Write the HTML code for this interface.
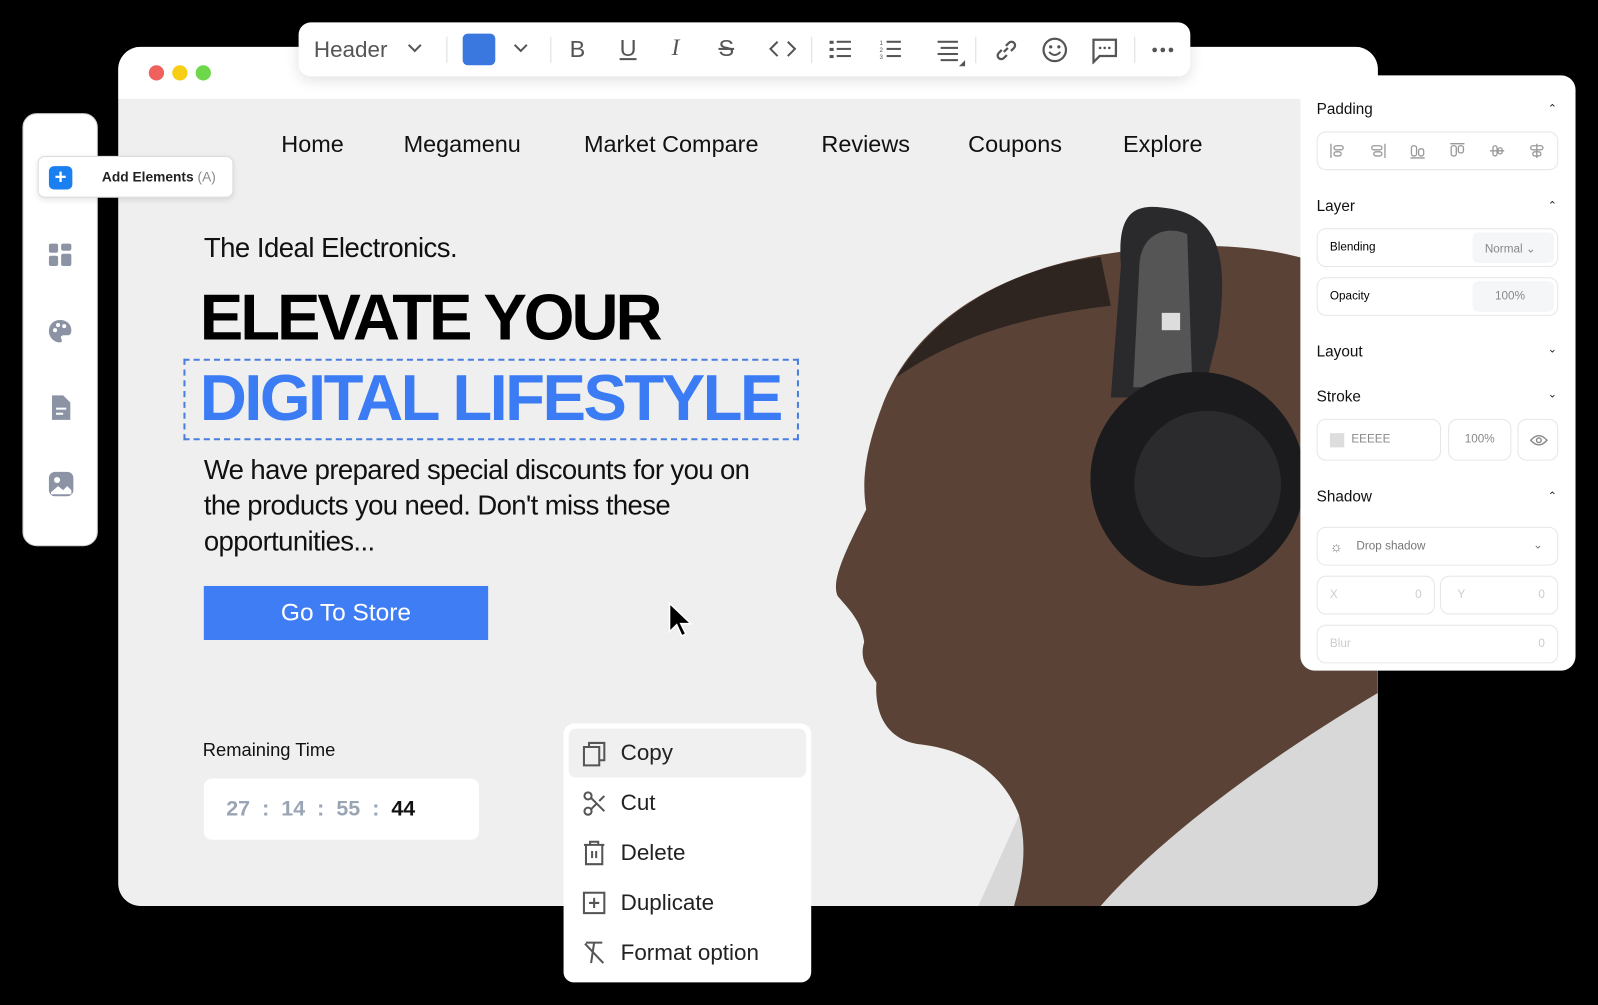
<!DOCTYPE html>
<html><head><meta charset="utf-8"><style>
*{margin:0;padding:0;box-sizing:border-box}
body{width:1598px;height:1005px;background:#000;overflow:hidden;font-family:"Liberation Sans",sans-serif}
#s{width:1568px;height:986px;position:relative;transform:scale(1.0191);transform-origin:0 0}
.a{position:absolute}
.win{left:116px;top:46px;width:1236px;height:843px;border-radius:22px;background:#efefef;overflow:hidden}
.top{left:0;top:0;width:1236px;height:51px;background:#fff}
.dot{width:15px;height:15px;border-radius:50%;top:18px}
.nav{top:82px;font-size:23px;color:#111}
.tb{left:293px;top:22px;width:875px;height:53px;background:#fff;border-radius:12px;box-shadow:0 4px 14px rgba(0,0,0,.12)}
.tb svg{position:absolute}
.sep{position:absolute;top:14px;width:1px;height:26px;background:#ddd}
.side{left:22px;top:111px;width:74px;height:425px;background:#fff;border-radius:14px;border:1px solid #ccc}
.panel{left:1276px;top:74px;width:270px;height:584px;background:#fff;border-radius:14px}
.panel .h{position:absolute;left:16px;font-size:15px;color:#111}
.panel .c{position:absolute;right:18px;font-size:11px;color:#222}
.box{position:absolute;border:1px solid #e6e6e6;border-radius:9px;font-size:11.5px}
.menu{left:553px;top:710px;width:243px;height:254px;background:#fff;border-radius:10px}
.mi{position:absolute;left:56px;font-size:22px;color:#222}
.mic{position:absolute;left:18px}
</style></head><body><div id="s">
<div class="a win">
 <div class="a top"></div>
 <div class="a dot" style="left:30px;background:#f0605c"></div>
 <div class="a dot" style="left:53px;background:#f6ce15"></div>
 <div class="a dot" style="left:76px;background:#6dd84a"></div>
 <svg class="a" style="left:0;top:0" width="1236" height="843" viewBox="116 46 1236 843">
  <path d="M1352 680 C1250 740 1120 780 1000 800 L960 889 L1352 889Z" fill="#d8d8d8"/>
  <path d="M1352 680 L1352 290 C1300 245 1200 230 1080 250 C960 270 890 330 865 400 C850 440 845 470 850 500 C830 540 815 570 822 585 C835 600 845 610 848 630 C842 650 855 660 860 670 C858 700 870 725 900 730 C950 735 985 760 1000 800 C1010 840 1000 870 995 889 L1080 889 C1140 820 1250 740 1352 680Z" fill="#5a4236"/>
  <path d="M1080 252 C990 262 915 310 880 370 C930 335 1000 310 1090 300Z" fill="#2e2420"/>
  <path d="M1090 390 L1100 260 C1095 200 1120 200 1150 205 C1200 215 1205 260 1195 330 L1180 390Z" fill="#2a2a2c"/>
  <path d="M1112 380 L1118 260 C1120 225 1150 222 1165 230 L1170 380Z" fill="#555"/>
  <rect x="1140" y="307" width="18" height="17" fill="#ddd"/>
  <circle cx="1175" cy="470" r="105" fill="#1b1b1d"/>
  <circle cx="1185" cy="475" r="72" fill="#2b2b2e"/>
 </svg>
 <div class="a nav" style="left:160px">Home</div>
 <div class="a nav" style="left:280px">Megamenu</div>
 <div class="a nav" style="left:457px">Market Compare</div>
 <div class="a nav" style="left:690px">Reviews</div>
 <div class="a nav" style="left:834px">Coupons</div>
 <div class="a nav" style="left:986px">Explore</div>
 <div class="a" style="left:84px;top:182px;font-size:27px;color:#111;letter-spacing:-.5px">The Ideal Electronics.</div>
 <div class="a" style="left:80px;top:228px;font-size:64px;font-weight:bold;color:#000;letter-spacing:-3px">ELEVATE YOUR</div>
 <div class="a" style="left:64px;top:306px;width:604px;height:80px;border:2px dashed #4a7fe0"></div>
 <div class="a" style="left:80px;top:307px;font-size:64px;font-weight:bold;color:#3b7cf5;letter-spacing:-2.5px">DIGITAL LIFESTYLE</div>
 <div class="a" style="left:84px;top:398px;font-size:27px;line-height:35px;color:#111;width:540px;letter-spacing:-.6px">We have prepared special discounts for you on the products you need. Don't miss these opportunities...</div>
 <div class="a" style="left:84px;top:529px;width:279px;height:53px;background:#3f7df5;color:#fff;font-size:24px;text-align:center;line-height:53px">Go To Store</div>
 <div class="a" style="left:83px;top:680px;font-size:18px;color:#111">Remaining Time</div>
 <div class="a" style="left:84px;top:718px;width:270px;height:60px;background:#fff;border-radius:8px;font-size:21px;font-weight:bold;color:#9aa5b4;line-height:60px;padding-left:22px;word-spacing:6px">27 : 14 : 55 : <span style="color:#111">44</span></div>
 <svg class="a" style="left:538px;top:544px" width="30" height="40" viewBox="0 0 30 40"><path d="M3 2 L3 30 L10 23 L15 34 L19 32 L14 22 L24 22Z" fill="#000" stroke="#fff" stroke-width="1.5"/></svg>
</div>

<div class="a tb">
 <div class="a" style="left:15px;top:14px;font-size:22px;color:#555">Header</div>
 <svg style="left:106px;top:20px" width="16" height="12"><path d="M2 2 L8 8 L14 2" fill="none" stroke="#555" stroke-width="2"/></svg>
 <div class="sep" style="left:145px"></div>
 <div class="a" style="left:161px;top:11px;width:32px;height:31px;background:#3a78e0;border-radius:5px"></div>
 <svg style="left:210px;top:20px" width="16" height="12"><path d="M2 2 L8 8 L14 2" fill="none" stroke="#555" stroke-width="2"/></svg>
 <div class="sep" style="left:247px"></div>
 <div class="a" style="left:266px;top:13px;font-size:23px;color:#555">B</div>
 <div class="a" style="left:315px;top:12px;font-size:23px;color:#555;text-decoration:underline">U</div>
 <div class="a" style="left:366px;top:12px;font-size:23px;color:#555;font-style:italic;font-family:'Liberation Serif',serif">I</div>
 <div class="a" style="left:412px;top:12px;font-size:23px;color:#555;text-decoration:line-through">S</div>
 <svg style="left:461px;top:16px" width="28" height="20"><path d="M9 3 L2 10 L9 17 M19 3 L26 10 L19 17" fill="none" stroke="#555" stroke-width="2"/></svg>
 <div class="sep" style="left:503px"></div>
 <svg style="left:520px;top:16px" width="24" height="22"><g fill="#555"><rect x="1" y="2" width="4" height="3"/><rect x="1" y="9" width="4" height="3"/><rect x="1" y="16" width="4" height="3"/><rect x="8" y="2" width="14" height="2"/><rect x="8" y="9" width="14" height="2"/><rect x="8" y="16" width="14" height="2"/></g></svg>
 <svg style="left:569px;top:16px" width="24" height="22"><g fill="#555" font-size="6" font-family="Liberation Sans"><text x="1" y="6">1</text><text x="1" y="13">2</text><text x="1" y="20">3</text><rect x="8" y="2" width="14" height="2"/><rect x="8" y="9" width="14" height="2"/><rect x="8" y="16" width="14" height="2"/></g></svg>
 <svg style="left:625px;top:16px" width="30" height="28"><g fill="#555"><rect x="2" y="2" width="20" height="2"/><rect x="5" y="8" width="17" height="2"/><rect x="2" y="14" width="20" height="2"/><rect x="5" y="20" width="17" height="2"/><path d="M23 27 L29 27 L29 21Z"/></g></svg>
 <div class="sep" style="left:664px"></div>
 <svg style="left:681px;top:14px" width="26" height="26"><path d="M11 15 L15 11 M9 13 L6 16 a3.5 3.5 0 0 0 5 5 L14 18 M13 9 L16 6 a3.5 3.5 0 0 1 5 5 L18 14" fill="none" stroke="#555" stroke-width="2.2"/></svg>
 <svg style="left:729px;top:14px" width="26" height="26"><circle cx="13" cy="13" r="11" fill="none" stroke="#555" stroke-width="2.2"/><circle cx="9" cy="10" r="1.6" fill="#555"/><circle cx="17" cy="10" r="1.6" fill="#555"/><path d="M7.5 15 Q13 21 18.5 15" fill="none" stroke="#555" stroke-width="2"/></svg>
 <svg style="left:778px;top:15px" width="26" height="26"><path d="M2 2 H24 V18 H8 L2 24Z" fill="none" stroke="#555" stroke-width="2.2"/><g fill="#555"><circle cx="8.5" cy="10" r="1.3"/><circle cx="13" cy="10" r="1.3"/><circle cx="17.5" cy="10" r="1.3"/></g></svg>
 <div class="sep" style="left:820px"></div>
 <svg style="left:836px;top:23px" width="26" height="8"><g fill="#555"><circle cx="4" cy="4" r="2.3"/><circle cx="12" cy="4" r="2.3"/><circle cx="20" cy="4" r="2.3"/></g></svg>
</div>

<div class="a side">
 <svg class="a" style="left:24px;top:126px" width="24" height="24"><g fill="#8b93a5"><rect x="1" y="1" width="9" height="9" rx="2"/><rect x="13" y="1" width="10" height="7" rx="2"/><rect x="1" y="13" width="9" height="10" rx="2"/><rect x="13" y="11" width="10" height="12" rx="2"/></g></svg>
 <svg class="a" style="left:24px;top:201px" width="24" height="24"><path d="M12 1 C5 1 1 6 1 12 C1 18 6 23 12 23 C14 23 14 21 13 19 C12 17 14 16 16 16 H19 C22 16 23 14 23 11 C23 5 18 1 12 1Z" fill="#8b93a5"/><g fill="#fff"><circle cx="7" cy="11" r="2"/><circle cx="10" cy="6" r="2"/><circle cx="16" cy="7" r="2"/></g></svg>
 <svg class="a" style="left:26px;top:275px" width="22" height="26"><path d="M2 1 H13 L20 8 V25 H2Z" fill="#8b93a5"/><g fill="#fff"><rect x="6" y="13" width="10" height="2"/><rect x="6" y="18" width="7" height="2"/></g></svg>
 <svg class="a" style="left:24px;top:350px" width="26" height="26"><rect x="1" y="1" width="24" height="24" rx="6" fill="#8b93a5"/><circle cx="9" cy="9" r="3" fill="#fff"/><path d="M3 21 L10 15 L15 19 L19 15 L23 19 V23 H3Z" fill="#fff"/></svg>
</div>
<div class="a" style="left:37px;top:153px;width:192px;height:41px;background:#fff;border:1px solid #ddd;border-radius:7px;box-shadow:0 2px 6px rgba(0,0,0,.1)">
 <div class="a" style="left:10px;top:9px;width:23px;height:23px;background:#1a7ff0;border-radius:5px;color:#fff;font-size:20px;line-height:22px;text-align:center;font-weight:bold">+</div>
 <div class="a" style="left:62px;top:12px;font-size:13.5px;color:#222;font-weight:bold">Add Elements <span style="color:#888;font-weight:normal">(A)</span></div>
</div>

<div class="a panel">
 <div class="h" style="top:25px">Padding</div><div class="c" style="top:26px">⌃</div>
 <div class="box" style="left:16px;top:55px;width:237px;height:38px"></div>
 <svg class="a" style="left:28px;top:66px" width="220" height="16"><g fill="none" stroke="#999" stroke-width="1.3">
  <path d="M2 1 V15"/><rect x="5" y="3" width="9" height="4" rx="2"/><rect x="5" y="9" width="7" height="4" rx="2"/>
  <path d="M55 1 V15"/><rect x="42" y="3" width="10" height="4" rx="2"/><rect x="44" y="9" width="8" height="4" rx="2"/>
  <path d="M80 15 H94"/><rect x="81" y="3" width="5" height="10" rx="2"/><rect x="88" y="6" width="5" height="7" rx="2"/>
  <path d="M119 1 H133"/><rect x="120" y="3" width="5" height="10" rx="2"/><rect x="127" y="3" width="5" height="7" rx="2"/>
  <path d="M158 8 H172"/><rect x="161" y="3" width="4" height="10" rx="2"/><rect x="166" y="5" width="4" height="6" rx="2"/>
  <path d="M204 1 V15"/><rect x="198" y="3" width="12" height="4" rx="2"/><rect x="200" y="9" width="8" height="4" rx="2"/>
 </g></svg>
 <div class="h" style="top:120px">Layer</div><div class="c" style="top:121px">⌃</div>
 <div class="box" style="left:16px;top:150px;width:237px;height:38px"><span class="a" style="left:12px;top:12px">Blending</span><span class="a" style="left:152px;top:3px;width:80px;height:30px;background:#f5f6f8;border-radius:6px;color:#888;padding:9px 12px">Normal ⌄</span></div>
 <div class="box" style="left:16px;top:198px;width:237px;height:38px"><span class="a" style="left:12px;top:12px">Opacity</span><span class="a" style="left:152px;top:3px;width:80px;height:30px;background:#f5f6f8;border-radius:6px;color:#888;padding:9px 22px">100%</span></div>
 <div class="h" style="top:263px">Layout</div><div class="c" style="top:262px">⌄</div>
 <div class="h" style="top:307px">Stroke</div><div class="c" style="top:306px">⌄</div>
 <div class="box" style="left:16px;top:337px;width:122px;height:41px;color:#888"><span class="a" style="left:12px;top:13px;width:14px;height:14px;background:#ddd"></span><span class="a" style="left:33px;top:13px">EEEEE</span></div>
 <div class="box" style="left:145px;top:337px;width:62px;height:41px;color:#888;text-align:center;line-height:39px">100%</div>
 <div class="box" style="left:213px;top:337px;width:40px;height:41px"><svg class="a" style="left:11px;top:14px" width="18" height="12"><path d="M1 6 Q9 -3 17 6 Q9 15 1 6Z" fill="none" stroke="#888" stroke-width="1.4"/><circle cx="9" cy="6" r="2.3" fill="none" stroke="#888" stroke-width="1.4"/></svg></div>
 <div class="h" style="top:405px">Shadow</div><div class="c" style="top:406px">⌃</div>
 <div class="box" style="left:16px;top:443px;width:237px;height:38px;color:#777"><span class="a" style="left:12px;top:10px;font-size:14px">☼</span><span class="a" style="left:38px;top:12px">Drop shadow</span><span class="a" style="right:14px;top:9px">⌄</span></div>
 <div class="box" style="left:16px;top:491px;width:116px;height:38px;color:#ccc"><span class="a" style="left:12px;top:12px">X</span><span class="a" style="right:12px;top:12px">0</span></div>
 <div class="box" style="left:137px;top:491px;width:116px;height:38px;color:#ccc"><span class="a" style="left:16px;top:12px">Y</span><span class="a" style="right:12px;top:12px">0</span></div>
 <div class="box" style="left:16px;top:539px;width:237px;height:38px;color:#ccc"><span class="a" style="left:12px;top:12px">Blur</span><span class="a" style="right:12px;top:12px">0</span></div>
</div>

<div class="a menu">
 <div class="a" style="left:5px;top:5px;width:233px;height:48px;background:#f0f0f0;border-radius:7px"></div>
 <svg class="mic" style="top:17px" width="24" height="26"><path d="M7 5 V2 H22 V19 H18 M2 6 H17 V24 H2Z" fill="none" stroke="#555" stroke-width="2"/></svg>
 <div class="mi" style="top:16px">Copy</div>
 <svg class="mic" style="top:66px" width="24" height="26"><g fill="none" stroke="#555" stroke-width="2"><circle cx="6" cy="5" r="3.5"/><circle cx="6" cy="20" r="3.5"/><path d="M9 7 L22 20 M9 18 L14 13 M17 10 L22 5"/></g></svg>
 <div class="mi" style="top:65px">Cut</div>
 <svg class="mic" style="top:114px" width="24" height="26"><g fill="none" stroke="#555" stroke-width="2"><path d="M2 5 H22 M8 5 V2 H16 V5 M4 5 V24 H20 V5 M10 11 V18 M14 11 V18"/></g></svg>
 <div class="mi" style="top:114px">Delete</div>
 <svg class="mic" style="top:163px" width="24" height="26"><g fill="none" stroke="#555" stroke-width="2"><rect x="2" y="3" width="20" height="20"/><path d="M12 8 V18 M7 13 H17"/></g></svg>
 <div class="mi" style="top:163px">Duplicate</div>
 <svg class="mic" style="top:212px" width="24" height="26"><g fill="none" stroke="#555" stroke-width="2"><path d="M4 3 H20 M12 3 L9 23 M3 4 L21 23"/></g></svg>
 <div class="mi" style="top:212px">Format option</div>
</div>
</div></body></html>
